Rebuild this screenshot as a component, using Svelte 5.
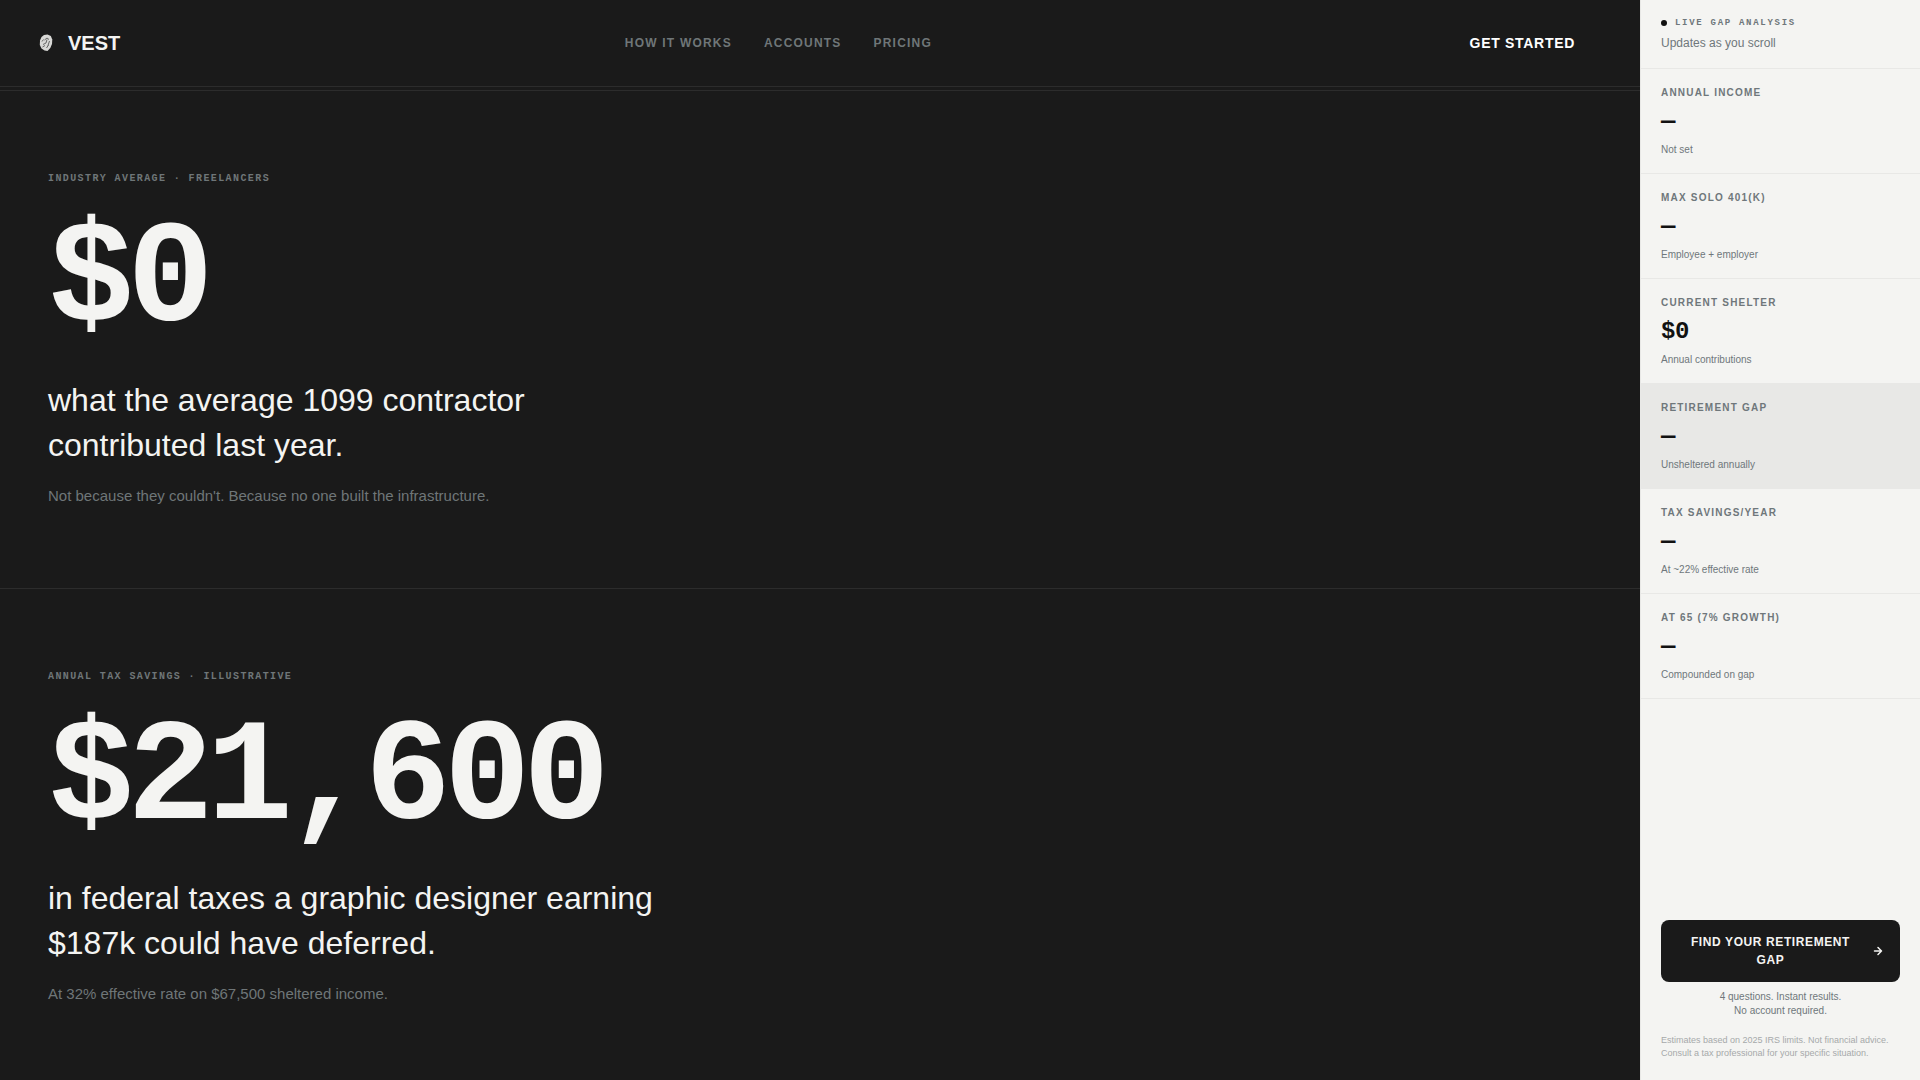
<script>
  const links = [
    { label: "How it works", href: "#how-it-works" },
    { label: "Accounts", href: "#accounts" },
    { label: "Pricing", href: "#pricing" },
  ]

  const stats = [
    {
      label: "Industry average · Freelancers",
      value: "$0",
      lines: ["what the average 1099 contractor", "contributed last year."],
      note: "Not because they couldn't. Because no one built the infrastructure.",
    },
    {
      label: "Annual tax savings · Illustrative",
      value: "$21,600",
      lines: [
        "in federal taxes a graphic designer earning",
        "$187k could have deferred.",
      ],
      note: "At 32% effective rate on $67,500 sheltered income.",
    },
  ]

  const metrics = [
    { label: "Annual income", value: null, hint: "Not set" },
    { label: "Max solo 401(k)", value: null, hint: "Employee + employer" },
    { label: "Current shelter", value: 0, hint: "Annual contributions" },
    {
      label: "Retirement gap",
      value: null,
      hint: "Unsheltered annually",
      highlight: true,
    },
    { label: "Tax savings/year", value: null, hint: "At ~22% effective rate" },
    { label: "At 65 (7% growth)", value: null, hint: "Compounded on gap" },
  ]

  const format = value =>
    value === null ? "—" : "$" + value.toLocaleString("en-US")
</script>

<div class="page">
  <div class="content">
    <header class="header">
      <a class="brand" href="#top">
        <svg class="brand-mark" viewBox="0 0 28 28" aria-hidden="true">
          <path
            d="M12 6 15.500 5.500 18.800 7 20.300 10.500 20 15 18.300 19 15.500 22 12.500 21.500 9.500 19.500 7.800 16 8 11.500 9.500 8z"
            fill="#d8d8d6"
          />
          <path
            d="M12.500 11l2.500-2 2 1.500M11 15.500l3-1.500 1-3.500M17.500 12l-1.500 4.500M10.500 18l2.500-1.500M14.500 19l2-3M10 12.500l1.500-2"
            fill="none"
            stroke="#5a5a5a"
            stroke-width="0.9"
          />
        </svg>
        <span>VEST</span>
      </a>
      <nav class="nav">
        {#each links as link}
          <a href={link.href}>{link.label}</a>
        {/each}
      </nav>
      <button class="start">Get started</button>
    </header>

    <main class="stats">
      {#each stats as stat}
        <section class="stat">
          <p class="stat-label">{stat.label}</p>
          <p class="stat-value">{stat.value}</p>
          <h2 class="stat-text">
            {stat.lines[0]}<br />{stat.lines[1]}
          </h2>
          <p class="stat-note">{stat.note}</p>
        </section>
      {/each}
    </main>
  </div>

  <aside class="sidebar">
    <div class="sidebar-head">
      <p class="live"><span class="dot"></span>Live gap analysis</p>
      <p class="live-note">Updates as you scroll</p>
    </div>

    {#each metrics as metric}
      <div class="metric" class:highlight={metric.highlight}>
        <p class="metric-label">{metric.label}</p>
        <p class="metric-value">{format(metric.value)}</p>
        <p class="metric-hint">{metric.hint}</p>
      </div>
    {/each}

    <div class="sidebar-foot">
      <button class="cta">
        <span>Find your retirement gap</span>
        <svg viewBox="0 0 24 24" aria-hidden="true">
          <path d="M5 12h14M12 5l7 7-7 7" />
        </svg>
      </button>
      <p class="cta-note">4 questions. Instant results.<br />No account required.</p>
      <p class="legal">
        Estimates based on 2025 IRS limits. Not financial advice. Consult a tax
        professional for your specific situation.
      </p>
    </div>
  </aside>
</div>

<style>
  :global(body) {
    background: #1a1a1a;
    font-family: "Liberation Sans", Arial, sans-serif;
  }

  .page {
    display: grid;
    grid-template-columns: minmax(0, 1fr) 280px;
    height: 100vh;
    overflow: hidden;
  }

  p,
  h2 {
    margin: 0;
  }

  a {
    color: inherit;
    text-decoration: none;
  }

  button {
    font-family: inherit;
    border: none;
    cursor: pointer;
  }

  .content {
    overflow: hidden;
    color: #f4f4f2;
    background: #1a1a1a;
  }

  .header {
    display: flex;
    align-items: center;
    justify-content: space-between;
    height: 86px;
    padding: 0 32px;
    border-bottom: 1px solid #2c2c2c;
  }

  .brand {
    display: flex;
    align-items: center;
    gap: 8px;
    font-size: 20px;
    font-weight: 700;
  }

  .brand-mark {
    width: 28px;
    height: 28px;
  }

  .nav {
    display: flex;
    gap: 32px;
    font-size: 12px;
    font-weight: 700;
    letter-spacing: 0.1em;
    text-transform: uppercase;
    color: #6f7678;
  }

  .start {
    padding: 12px 32px;
    font-size: 14px;
    font-weight: 700;
    letter-spacing: 0.05em;
    text-transform: uppercase;
    color: #fff;
    background: transparent;
    border: 1px solid transparent;
  }

  .stats {
    margin-top: 3px;
    border-top: 1px solid #2c2c2c;
  }

  .stat {
    padding: 80px 48px;
    border-bottom: 1px solid #2c2c2c;
  }

  .stat-label {
    margin-bottom: 31px;
    font-family: "Liberation Mono", monospace;
    font-size: 10px;
    line-height: 16px;
    font-weight: 700;
    letter-spacing: 0.14em;
    text-transform: uppercase;
    color: #6f7678;
  }

  .stat-value {
    margin-bottom: 32px;
    font-family: "Liberation Mono", monospace;
    font-size: 144px;
    line-height: 128px;
    font-weight: 700;
    letter-spacing: -0.05em;
  }

  .stat-text {
    margin-bottom: 16px;
    font-size: 32px;
    line-height: 45px;
    font-weight: 400;
  }

  .stat-note {
    font-size: 15px;
    line-height: 24px;
    color: #6f7678;
  }

  .sidebar {
    display: flex;
    flex-direction: column;
    color: #6f777b;
    background: #f4f4f2;
    border-left: 1px solid #e8e8e6;
  }

  .sidebar-head {
    padding: 16px 20px;
    border-bottom: 1px solid #e8e8e6;
  }

  .live {
    display: flex;
    align-items: center;
    gap: 8px;
    margin-bottom: 4px;
    font-family: "Liberation Mono", monospace;
    font-size: 9px;
    line-height: 14px;
    font-weight: 700;
    letter-spacing: 0.19em;
    text-transform: uppercase;
  }

  .dot {
    width: 6px;
    height: 6px;
    border-radius: 50%;
    background: #111;
  }

  .live-note {
    font-size: 12px;
    line-height: 18px;
  }

  .metric {
    padding: 16px 20px;
    border-bottom: 1px solid #e8e8e6;
  }

  .metric.highlight {
    background: #e8e8e6;
  }

  .metric-label {
    margin-bottom: 8px;
    font-size: 10px;
    line-height: 15px;
    font-weight: 700;
    letter-spacing: 0.12em;
    text-transform: uppercase;
  }

  .metric-value {
    margin-bottom: 6px;
    font-family: "Liberation Mono", monospace;
    font-size: 24px;
    line-height: 28px;
    font-weight: 700;
    letter-spacing: -0.02em;
    color: #111;
  }

  .metric-hint {
    font-size: 10px;
    line-height: 15px;
  }

  .sidebar-foot {
    margin-top: auto;
    padding: 20px;
  }

  .cta {
    display: flex;
    align-items: center;
    gap: 8px;
    width: 100%;
    padding: 13px 16px;
    font-size: 12px;
    line-height: 18px;
    font-weight: 700;
    letter-spacing: 0.05em;
    text-transform: uppercase;
    color: #f4f4f2;
    background: #1a1a1a;
    border-radius: 8px;
  }

  .cta span {
    flex: 1;
  }

  .cta svg {
    flex: none;
    width: 12px;
    height: 12px;
    fill: none;
    stroke: currentColor;
    stroke-width: 3;
    stroke-linecap: round;
    stroke-linejoin: round;
  }

  .cta-note {
    margin: 8px 0 16px;
    font-size: 10px;
    line-height: 14px;
    text-align: center;
  }

  .legal {
    font-size: 9px;
    line-height: 13px;
    color: #a6a9aa;
  }
</style>
